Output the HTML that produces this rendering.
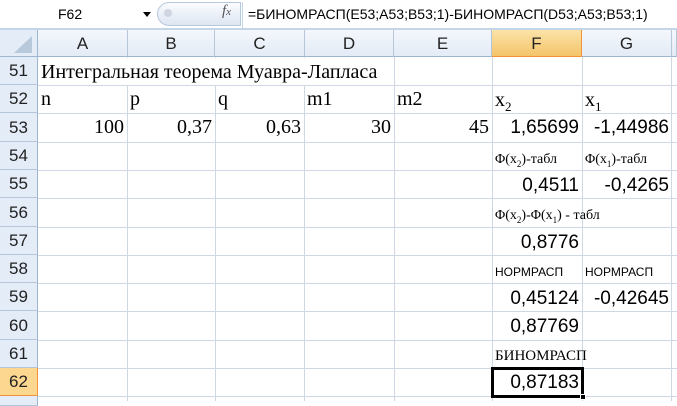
<!DOCTYPE html>
<html><head><meta charset="utf-8"><style>
*{margin:0;padding:0;box-sizing:border-box}
body{width:677px;height:401px;overflow:hidden;background:#fff;position:relative;font-family:"Liberation Sans",sans-serif}
.a{position:absolute;white-space:nowrap}
.vl{position:absolute;width:1px;background:#d0d7e5;top:57px;height:344px}
.hl{position:absolute;height:1px;background:#d0d7e5;left:38px;width:639px}
.ch{position:absolute;top:30px;height:27px;font-size:17px;color:#222;text-align:center;line-height:27px;background:linear-gradient(#f4f7fc,#e3ebf6);border-right:1px solid #b5c6da;border-bottom:1px solid #9eb6ce}
.rh{position:absolute;left:0;width:38px;font-size:17px;color:#222;text-align:center;background:#e4ecf7;border-right:1px solid #9eb6ce;border-bottom:1px solid #b5c6da}
.s{font-family:"Liberation Serif",serif;color:#000}
.n{font-size:19px;color:#000;text-align:right}
</style></head><body>
<div class="a" style="left:0;top:0;width:677px;height:30px;background:#fff;border-bottom:2px solid #c5d5e8"></div>
<div class="a" style="left:0;top:3px;width:155px;height:22px;font-size:14px;line-height:22px;padding-left:58px;color:#000">F62</div>
<div class="a" style="left:143px;top:12px;width:0;height:0;border-left:4px solid transparent;border-right:4px solid transparent;border-top:5px solid #000"></div>
<div class="a" style="left:157px;top:2px;width:84px;height:24px;border-radius:12px 0 0 12px;background:linear-gradient(#fafcff,#dde6f2);border:1px solid #b7c8dc"></div>
<div class="a" style="left:164px;top:9px;width:8px;height:8px;border-radius:50%;background:#cfd6df"></div>
<div class="a" style="left:222px;top:3px;font-family:'Liberation Serif',serif;font-style:italic;font-size:15px;color:#555">f<span style="font-size:11px">x</span></div>
<div class="a" style="left:242px;top:2px;width:1px;height:26px;background:#c5d5e8"></div>
<div class="a" style="left:248px;top:4px;font-size:14px;color:#000;line-height:20px">=БИНОМРАСП(E53;A53;B53;1)-БИНОМРАСП(D53;A53;B53;1)</div>
<div class="a" style="left:0;top:30px;width:38px;height:27px;background:#e4ecf7;border-right:1px solid #9eb6ce;border-bottom:1px solid #9eb6ce"></div>
<div class="a" style="left:14px;top:36px;width:0;height:0;border-left:18px solid transparent;border-bottom:17px solid #b9c9dc"></div>
<div class="ch" style="left:38px;width:90px">A</div>
<div class="ch" style="left:128px;width:87px">B</div>
<div class="ch" style="left:215px;width:90px">C</div>
<div class="ch" style="left:305px;width:89px">D</div>
<div class="ch" style="left:394px;width:98px">E</div>
<div class="ch" style="left:492px;width:90px;background:linear-gradient(#fbe3a8,#f4c46a);border-color:#f29436">F</div>
<div class="ch" style="left:582px;width:90px">G</div>
<div class="ch" style="left:672px;width:5px"></div>
<div class="vl" style="left:127px"></div><div class="vl" style="left:215px"></div><div class="vl" style="left:304px"></div><div class="vl" style="left:394px"></div><div class="vl" style="left:492px"></div><div class="vl" style="left:582px"></div><div class="vl" style="left:671px"></div>
<div class="hl" style="top:85px"></div><div class="hl" style="top:113px"></div><div class="hl" style="top:142px"></div><div class="hl" style="top:170px"></div><div class="hl" style="top:198px"></div><div class="hl" style="top:227px"></div><div class="hl" style="top:255px"></div><div class="hl" style="top:283px"></div><div class="hl" style="top:311px"></div><div class="hl" style="top:340px"></div><div class="hl" style="top:368px"></div><div class="hl" style="top:396px"></div>
<div class="rh" style="top:57px;height:28px;line-height:28px">51</div>
<div class="rh" style="top:85px;height:28px;line-height:28px">52</div>
<div class="rh" style="top:113px;height:29px;line-height:29px">53</div>
<div class="rh" style="top:142px;height:28px;line-height:28px">54</div>
<div class="rh" style="top:170px;height:28px;line-height:28px">55</div>
<div class="rh" style="top:198px;height:29px;line-height:29px">56</div>
<div class="rh" style="top:227px;height:28px;line-height:28px">57</div>
<div class="rh" style="top:255px;height:28px;line-height:28px">58</div>
<div class="rh" style="top:283px;height:28px;line-height:28px">59</div>
<div class="rh" style="top:311px;height:29px;line-height:29px">60</div>
<div class="rh" style="top:340px;height:28px;line-height:28px">61</div>
<div class="rh" style="top:368px;height:28px;line-height:28px;background:#fcd78f;border-right-color:#f29436;border-bottom-color:#f29436">62</div>
<div class="rh" style="top:396px;height:10px"></div>
<div class="a" style="left:39px;top:58px;width:353px;height:27px;background:#fff"></div>
<div class="a s" style="left:41px;top:59px;font-size:20px;line-height:26px">Интегральная теорема Муавра-Лапласа</div>
<div class="a s" style="left:41px;top:87px;font-size:20px;line-height:24px">n</div>
<div class="a s" style="left:130px;top:87px;font-size:20px;line-height:24px">p</div>
<div class="a s" style="left:218px;top:87px;font-size:20px;line-height:24px">q</div>
<div class="a s" style="left:307px;top:87px;font-size:20px;line-height:24px">m1</div>
<div class="a s" style="left:397px;top:87px;font-size:20px;line-height:24px">m2</div>
<div class="a s" style="left:495px;top:86px;font-size:20px;line-height:28px">x<sub style="font-size:13px">2</sub></div>
<div class="a s" style="left:585px;top:86px;font-size:20px;line-height:28px">x<sub style="font-size:13px">1</sub></div>
<div class="a s" style="left:40px;width:84px;top:116px;font-size:20px;text-align:right">100</div>
<div class="a s" style="left:128px;width:84px;top:116px;font-size:20px;text-align:right">0,37</div>
<div class="a s" style="left:216px;width:85px;top:116px;font-size:20px;text-align:right">0,63</div>
<div class="a s" style="left:305px;width:86px;top:116px;font-size:20px;text-align:right">30</div>
<div class="a s" style="left:395px;width:94px;top:116px;font-size:20px;text-align:right">45</div>
<div class="a n" style="left:493px;width:86px;top:117px">1,65699</div>
<div class="a n" style="left:583px;width:86px;top:117px">-1,44986</div>
<div class="a s" style="left:495px;top:152px;font-size:14px">Φ(x<sub style="font-size:9px">2</sub>)-табл</div>
<div class="a s" style="left:585px;top:152px;font-size:14px">Φ(x<sub style="font-size:9px">1</sub>)-табл</div>
<div class="a n" style="left:493px;width:86px;top:175px">0,4511</div>
<div class="a n" style="left:583px;width:86px;top:175px">-0,4265</div>
<div class="a" style="left:583px;top:199px;width:88px;height:27px;background:#fff"></div>
<div class="a s" style="left:495px;top:208px;font-size:14px">Φ(x<sub style="font-size:9px">2</sub>)-Φ(x<sub style="font-size:9px">1</sub>) - табл</div>
<div class="a n" style="left:493px;width:86px;top:232px">0,8776</div>
<div class="a" style="left:495px;top:265px;font-size:12px;color:#000">НОРМРАСП</div>
<div class="a" style="left:585px;top:265px;font-size:12px;color:#000">НОРМРАСП</div>
<div class="a n" style="left:493px;width:86px;top:288px">0,45124</div>
<div class="a n" style="left:583px;width:86px;top:288px">-0,42645</div>
<div class="a n" style="left:493px;width:86px;top:316px">0,87769</div>
<div class="a s" style="left:495px;top:348px;font-size:15px">БИНОМРАСП</div>
<div class="a n" style="left:493px;width:86px;top:372px">0,87183</div>
<div class="a" style="left:491px;top:367px;width:93px;height:31px;border:3px solid #000"></div>
<div class="a" style="left:580px;top:394px;width:6px;height:6px;background:#000;border:1px solid #fff"></div>
</body></html>
